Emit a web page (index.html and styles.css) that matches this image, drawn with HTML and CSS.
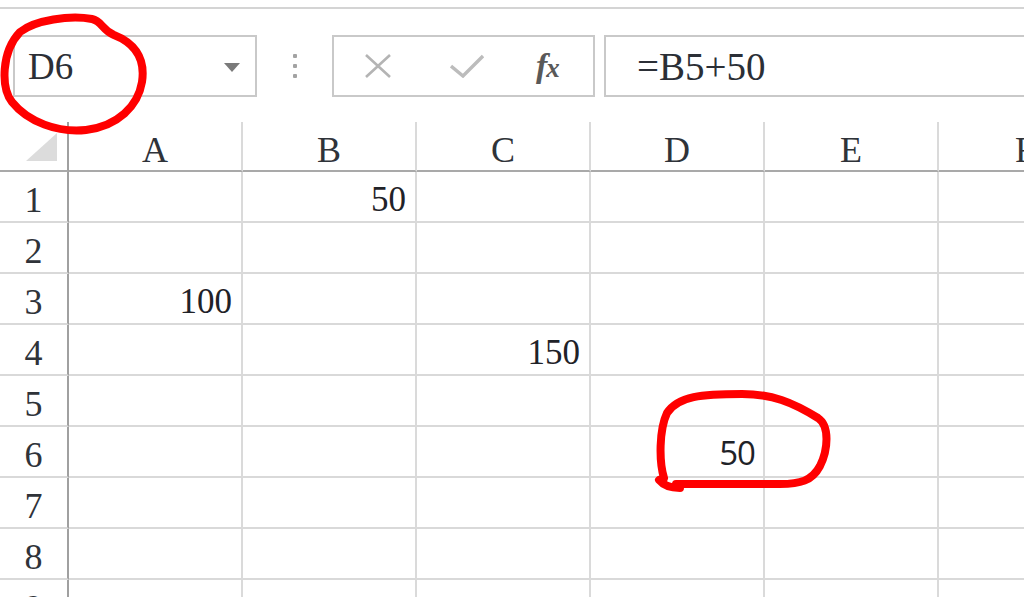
FILE: index.html
```html
<!DOCTYPE html>
<html lang="en">
<head>
    <meta charset="UTF-8">
    <meta name="viewport" content="width=device-width, initial-scale=1.0">
    <title>Sheet - D6</title>
    <link rel="stylesheet" href="styles.css">
</head>
<body>
    <div class="app">
        <!-- Ribbon edge -->
        <div class="ribbon-edge"></div>

        <!-- Formula Bar -->
        <div class="formula-bar">
            <div class="name-box">
                <span class="name-text">D6</span>
                <svg class="name-arrow" width="16" height="9" viewBox="0 0 16 9">
                    <path d="M0 0 L16 0 L8 9 Z" fill="#7a7a7a"/>
                </svg>
            </div>
            <div class="grip">
                <span></span><span></span><span></span>
            </div>
            <div class="fx-buttons">
                <svg class="fx-icon" width="28" height="24" viewBox="0 0 28 24">
                    <path d="M2 1 L26 23 M26 1 L2 23" stroke="#b4b4b4" stroke-width="2.6" fill="none"/>
                </svg>
                <svg class="fx-icon" width="34" height="24" viewBox="0 0 34 24">
                    <path d="M1 12 L13 22 L33 2" stroke="#bcbcbc" stroke-width="3.4" fill="none"/>
                </svg>
                <span class="fx-label"><i>f</i><i class="fx-x">x</i></span>
            </div>
            <div class="formula-input">=B5+50</div>
        </div>

        <!-- Grid -->
        <div class="sheet">
            <div class="col-head corner">
                <svg width="32" height="28" viewBox="0 0 32 28">
                    <path d="M0 28 L31 28 L31 0 Z" fill="#dcdcdc"/>
                </svg>
            </div>
            <div class="col-head">A</div>
            <div class="col-head">B</div>
            <div class="col-head">C</div>
            <div class="col-head">D</div>
            <div class="col-head">E</div>
            <div class="col-head">F</div>

            <div class="row-head">1</div>
            <div class="cell"></div>
            <div class="cell">50</div>
            <div class="cell"></div>
            <div class="cell"></div>
            <div class="cell"></div>
            <div class="cell"></div>

            <div class="row-head">2</div>
            <div class="cell"></div>
            <div class="cell"></div>
            <div class="cell"></div>
            <div class="cell"></div>
            <div class="cell"></div>
            <div class="cell"></div>

            <div class="row-head">3</div>
            <div class="cell">100</div>
            <div class="cell"></div>
            <div class="cell"></div>
            <div class="cell"></div>
            <div class="cell"></div>
            <div class="cell"></div>

            <div class="row-head">4</div>
            <div class="cell"></div>
            <div class="cell"></div>
            <div class="cell">150</div>
            <div class="cell"></div>
            <div class="cell"></div>
            <div class="cell"></div>

            <div class="row-head">5</div>
            <div class="cell"></div>
            <div class="cell"></div>
            <div class="cell"></div>
            <div class="cell"></div>
            <div class="cell"></div>
            <div class="cell"></div>

            <div class="row-head">6</div>
            <div class="cell"></div>
            <div class="cell"></div>
            <div class="cell"></div>
            <div class="cell cell-sans">50</div>
            <div class="cell"></div>
            <div class="cell"></div>

            <div class="row-head">7</div>
            <div class="cell"></div>
            <div class="cell"></div>
            <div class="cell"></div>
            <div class="cell"></div>
            <div class="cell"></div>
            <div class="cell"></div>

            <div class="row-head">8</div>
            <div class="cell"></div>
            <div class="cell"></div>
            <div class="cell"></div>
            <div class="cell"></div>
            <div class="cell"></div>
            <div class="cell"></div>

            <div class="row-head">9</div>
            <div class="cell"></div>
            <div class="cell"></div>
            <div class="cell"></div>
            <div class="cell"></div>
            <div class="cell"></div>
            <div class="cell"></div>
        </div>

        <!-- Hand-drawn marks -->
        <svg class="marks" width="1024" height="597" viewBox="0 0 1024 597">
            <path d="M20 32 C35 20, 70 15, 92 19 C102 21, 102 30, 114 35 C132 42, 146 56, 142 82 C138 106, 118 126, 86 130 C58 133, 28 122, 12 102 C1 88, 1 52, 20 32 Z"/>
            <path d="M664 478 C659 462, 659 430, 667 413 C678 396, 702 394, 742 394 C772 394, 792 402, 818 418 C830 426, 828 450, 820 466 C812 481, 800 484, 780 484 L676 484 M659 480 C664 486, 672 488, 680 488"/>
        </svg>
    </div>
</body>
</html>
```

FILE: styles.css
```css
/* Base */
* {
    box-sizing: border-box;
    margin: 0;
    padding: 0;
}

body {
    background: #ffffff;
    font-family: 'Liberation Serif', 'Times New Roman', serif;
    color: #222428;
    overflow: hidden;
}

.app {
    position: relative;
    width: 1024px;
    height: 597px;
    overflow: hidden;
}

.ribbon-edge {
    height: 9px;
    border-bottom: 2px solid #d4d4d4;
}

/* Formula bar */
.formula-bar {
    display: flex;
    align-items: stretch;
    height: 62px;
    margin-top: 26px;
    margin-bottom: 25px;
    padding-left: 13px;
}

.name-box {
    width: 244px;
    border: 2px solid #c9c9c9;
    display: flex;
    align-items: center;
    justify-content: space-between;
    padding: 0 15px 0 13px;
}

.name-text {
    font-size: 37px;
    color: #2b2f36;
}

.name-arrow {
    margin-top: 2px;
}

.grip {
    width: 75px;
    display: flex;
    flex-direction: column;
    align-items: center;
    justify-content: center;
    gap: 6px;
}

.grip span {
    width: 4px;
    height: 4px;
    background: #a3a3a3;
    border-radius: 1px;
}

.fx-buttons {
    width: 263px;
    border: 2px solid #c9c9c9;
    display: flex;
    align-items: center;
    padding-left: 30px;
    gap: 58px;
}

.fx-icon {
    display: block;
}

.fx-label {
    font-size: 34px;
    font-weight: bold;
    color: #595959;
    margin-left: -6px;
}

.fx-label .fx-x {
    font-size: 27px;
    margin-left: -1px;
}

.formula-input {
    flex: 1;
    margin-left: 9px;
    margin-right: -20px;
    border: 2px solid #c9c9c9;
    display: flex;
    align-items: center;
    padding-left: 31px;
    font-size: 39px;
    color: #2b2f36;
}

/* Grid */
.sheet {
    display: grid;
    grid-template-columns: 69px repeat(6, 174px);
    grid-template-rows: 50px repeat(9, 51px);
}

.col-head {
    display: flex;
    align-items: center;
    justify-content: center;
    padding-top: 8px;
    font-size: 36px;
    color: #2f3339;
    border-right: 2px solid #dadada;
    border-bottom: 2px solid #a9a9a9;
}

.col-head.corner {
    border-right: 2px solid #a0a0a0;
    justify-content: flex-end;
    align-items: flex-end;
    padding: 0 9px 9px 0;
}

.row-head {
    display: flex;
    align-items: center;
    justify-content: center;
    padding-top: 6px;
    font-size: 36px;
    color: #2f3339;
    border-right: 2px solid #a0a0a0;
    border-bottom: 2px solid #d9d9d9;
}

.cell {
    display: flex;
    align-items: center;
    justify-content: flex-end;
    padding: 6px 9px 0 0;
    font-size: 35px;
    color: #1f2228;
    border-right: 2px solid #dadada;
    border-bottom: 2px solid #d9d9d9;
}

.cell-sans {
    font-family: 'Open Sans', 'Liberation Sans', sans-serif;
    font-size: 33px;
    letter-spacing: -1px;
    padding-right: 8px;
    padding-top: 2px;
}

/* Red annotation marks */
.marks {
    position: absolute;
    top: 0;
    left: 0;
    pointer-events: none;
}

.marks path {
    fill: none;
    stroke: #ff0000;
    stroke-width: 8;
    stroke-linecap: round;
    stroke-linejoin: round;
}
```
